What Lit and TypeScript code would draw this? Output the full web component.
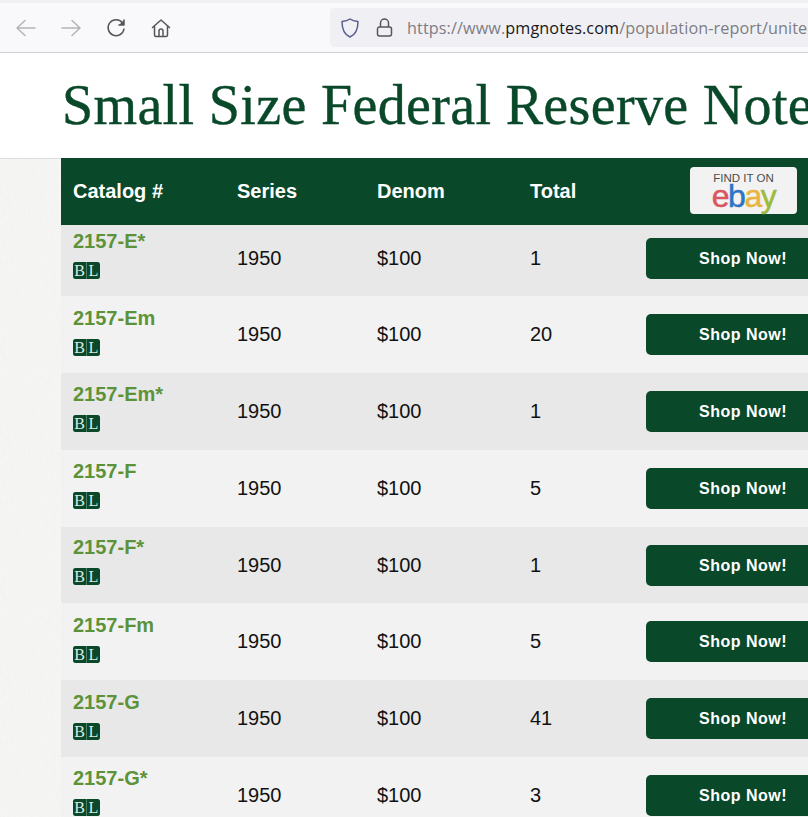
import { LitElement, html, css, svg } from 'lit';
import { customElement } from 'lit/decorators.js';

const rows = [
  { cat: '2157-E*', total: '1', h: 71, pt: 4, pb: 5 },
  { cat: '2157-Em', total: '20', h: 77, pt: 10, pb: 0 },
  { cat: '2157-Em*', total: '1', h: 77, pt: 9, pb: 0 },
  { cat: '2157-F', total: '5', h: 77, pt: 9, pb: 0 },
  { cat: '2157-F*', total: '1', h: 76, pt: 8, pb: 0 },
  { cat: '2157-Fm', total: '5', h: 77, pt: 10, pb: 0 },
  { cat: '2157-G', total: '41', h: 77, pt: 10, pb: 0 },
  { cat: '2157-G*', total: '3', h: 77, pt: 9, pb: 0 },
];

const icon = (w: number, h: number, body: unknown, color = '#55555c') => html`
  <svg width=${w} height=${h} viewBox="0 0 ${w} ${h}" fill="none" stroke=${color} stroke-width="1.5" stroke-linecap="round" stroke-linejoin="round">${body}</svg>
`;

@customElement('app-root')
export class AppRoot extends LitElement {
  static styles = css`
    :host {
      display: block;
      width: 808px;
      height: 817px;
      overflow: hidden;
      background-color: #f7f7f6;
      background-image: url("data:image/svg+xml,%3Csvg xmlns='http://www.w3.org/2000/svg' width='240' height='240'%3E%3Cfilter id='n'%3E%3CfeTurbulence type='fractalNoise' baseFrequency='0.35' numOctaves='3' stitchTiles='stitch'/%3E%3CfeColorMatrix values='0 0 0 0 0.5 0 0 0 0 0.5 0 0 0 0 0.5 0 0 0 0.08 0'/%3E%3C/filter%3E%3Crect width='240' height='240' filter='url(%23n)'/%3E%3C/svg%3E");
      font-family: 'Liberation Sans', Arial, sans-serif;
    }
    .chrome {
      height: 53px;
      box-sizing: border-box;
      background: #f9f9fb;
      border-top: 3px solid #f0f0f3;
      border-bottom: 1px solid #cfcfd2;
      display: flex;
      align-items: center;
      padding-left: 15px;
    }
    .nav {
      display: flex;
      align-items: center;
      gap: 24.5px;
      width: 315px;
    }
    .nav svg,
    .url svg { display: block; flex-shrink: 0; }
    .url {
      flex: 1;
      height: 39px;
      background: #f0f0f4;
      border-radius: 4px 0 0 4px;
      display: flex;
      align-items: center;
      padding-left: 10px;
      white-space: nowrap;
      overflow: hidden;
      font-family: 'Open Sans', sans-serif;
      font-size: 16.2px;
      letter-spacing: 0.1px;
      color: #7d7d84;
    }
    .url svg + svg { margin-left: 16px; }
    .url span { margin-left: 14px; padding-top: 1px; }
    .url b { font-weight: 400; color: #17171a; }
    .title {
      height: 106px;
      box-sizing: border-box;
      background: #fff;
      border-bottom: 1px solid #dedede;
      padding: 20px 0 0 62px;
      white-space: nowrap;
      overflow: hidden;
      font-family: 'Liberation Serif', Georgia, serif;
      font-size: 56px;
      line-height: 64px;
      letter-spacing: 0.35px;
      -webkit-text-stroke: 0.4px #0a482a;
      color: #0a482a;
    }
    .table { margin-left: 61px; margin-top: -1px; width: 760px; }
    .row {
      display: grid;
      grid-template-columns: 176px 140px 153px 116px 175px;
      align-items: center;
      box-sizing: border-box;
      font-size: 20px;
      color: #111;
    }
    .row > div:first-child { padding-left: 12px; }
    .head {
      height: 67px;
      background: #0a482a;
      color: #fff;
      font-weight: 700;
      font-size: 20px;
    }
    .ebay {
      margin-left: 44px;
      margin-bottom: 2px;
      width: 107px;
      height: 47px;
      box-sizing: border-box;
      background: #f2f2f2;
      border-radius: 4px;
      display: flex;
      flex-direction: column;
      align-items: center;
      font-weight: 400;
    }
    .ebay small {
      font-size: 11.5px;
      line-height: 12px;
      margin-top: 5px;
      color: #4c4c4c;
    }
    .logo {
      display: block;
      font-size: 32px;
      line-height: 25px;
      letter-spacing: -1.5px;
      -webkit-text-stroke: 0.5px currentColor;
    }
    .e { color: #d95560; }
    .b { color: #2f74c4; }
    .a { color: #e8b53f; }
    .y { color: #9dba3c; }
    .body:nth-child(even) { background: #e8e8e8; }
    .body:nth-child(odd) { background: #f2f2f2; }
    .cat {
      align-self: start;
      font-weight: 700;
      color: #5c9339;
      line-height: 24px;
    }
    .bl {
      display: flex;
      gap: 1px;
      width: 27px;
      height: 17px;
      margin-top: 9px;
      background: #4f7f66;
      border-radius: 3px;
      overflow: hidden;
    }
    .bl span {
      flex: 1;
      font-family: 'Liberation Serif', serif;
      font-weight: 400;
      font-size: 16px;
      line-height: 17px;
      text-align: center;
      color: #dfeae4;
      background: #0a482a;
    }
    .shop {
      height: 41px;
      width: 175px;
      background: #0a482a;
      border-radius: 5px 0 0 5px;
      color: #fff;
      font-weight: 700;
      font-size: 16px;
      letter-spacing: 0.5px;
      display: flex;
      align-items: center;
      padding: 1px 0 0 53px;
      box-sizing: border-box;
    }
  `;

  render() {
    return html`
      <div class="chrome">
        <div class="nav">
          ${icon(21, 20, svg`<path d="M20 10H2M10 2.5 2 10l8 7.5"/>`, '#b4b4b8')}
          ${icon(21, 20, svg`<path d="M1 10h18M11 2.5l8 7.5-8 7.5"/>`, '#b4b4b8')}
          ${icon(20, 20, svg`<path d="M16.6 5A8 8 0 1 0 18 11"/><path d="M18 2v5h-5" fill="#55555c"/>`)}
          ${icon(20, 20, svg`<path d="M1.5 9.5 10 2l8.5 7.5M3.5 8v9a1.5 1.5 0 0 0 1.5 1.5h10a1.5 1.5 0 0 0 1.5-1.5V8M8 18.5V13a2 2 0 0 1 4 0v5.5"/>`)}
        </div>
        <div class="url">
          ${icon(20, 22, svg`<path d="M10 2c2 1.5 4.5 2.2 8 2.500 0 8-2 13-8 15.500C4 17.500 2 12.500 2 4.500 5.500 4.200 8 3.500 10 2z" stroke="#5a5d8f"/>`)}
          ${icon(17, 22, svg`<path d="M4.500 10V6a4 4 0 0 1 8 0v4M3.500 10h10a2 2 0 0 1 2 2v5a2 2 0 0 1-2 2h-10a2 2 0 0 1-2-2v-5a2 2 0 0 1 2-2z"/>`)}
          <span>https://www.<b>pmgnotes.com</b>/population-report/united-states/</span>
        </div>
      </div>
      <div class="title">Small Size Federal Reserve Notes</div>
      <div class="table">
        <div class="row head">
          <div>Catalog #</div>
          <div>Series</div>
          <div>Denom</div>
          <div>Total</div>
          <div>
            <div class="ebay">
              <small>FIND IT ON</small>
              <div class="logo"><span class="e">e</span><span class="b">b</span><span class="a">a</span><span class="y">y</span></div>
            </div>
          </div>
        </div>
        ${rows.map(
          (r) => html`
            <div class="row body" style="height:${r.h}px;padding-bottom:${r.pb}px">
              <div class="cat" style="padding-top:${r.pt}px">
                ${r.cat}
                <div class="bl"><span>B</span><span>L</span></div>
              </div>
              <div>1950</div>
              <div>$100</div>
              <div>${r.total}</div>
              <div class="shop">Shop Now!</div>
            </div>
          `
        )}
      </div>
    `;
  }
}
